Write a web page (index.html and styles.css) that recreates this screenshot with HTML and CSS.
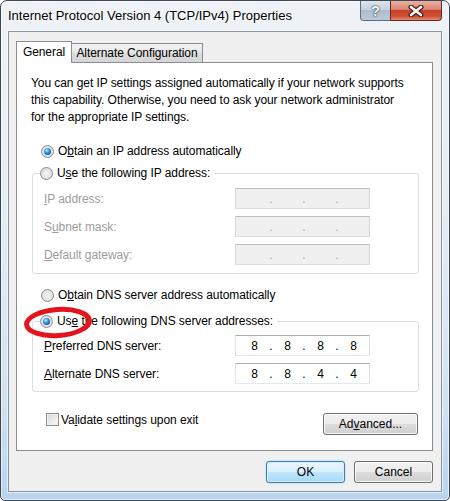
FILE: index.html
```html
<!DOCTYPE html>
<html lang="en">
<head>
    <meta charset="UTF-8">
    <title>Internet Protocol Version 4 (TCP/IPv4) Properties</title>
    <link rel="stylesheet" href="styles.css">
</head>
<body>
    <div class="window">
        <div class="titlebar">
            <div class="title">Internet Protocol Version 4 (TCP/IPv4) Properties</div>
            <div class="caption-btns">
                <div class="cap-btn help">?</div>
                <div class="cap-btn close">
                    <svg width="16" height="12" viewBox="0 0 16 12">
                        <path d="M3 2 L13 10 M13 2 L3 10" stroke="#4a1d15" stroke-width="5" stroke-linecap="round"/>
                        <path d="M3 2 L13 10 M13 2 L3 10" stroke="#fff" stroke-width="2.6" stroke-linecap="round"/>
                    </svg>
                </div>
            </div>
        </div>

        <div class="client">
            <div class="tabs">
                <div class="tab active">General</div>
                <div class="tab">Alternate Configuration</div>
            </div>

            <div class="panel">
                <p class="intro">You can get IP settings assigned automatically if your network supports<br>this capability. Otherwise, you need to ask your network administrator<br>for the appropriate IP settings.</p>

                <div class="option first"><span class="radio on"></span><span>O<u>b</u>tain an IP address automatically</span></div>

                <div class="group">
                    <div class="option group-head"><span class="radio"></span><span>U<u>s</u>e the following IP address:</span></div>
                    <div class="field-row disabled first-field">
                        <label><u>I</u>P address:</label>
                        <div class="ip"><span class="oct"></span><span class="dot">.</span><span class="oct"></span><span class="dot">.</span><span class="oct"></span><span class="dot">.</span><span class="oct"></span></div>
                    </div>
                    <div class="field-row disabled">
                        <label>S<u>u</u>bnet mask:</label>
                        <div class="ip"><span class="oct"></span><span class="dot">.</span><span class="oct"></span><span class="dot">.</span><span class="oct"></span><span class="dot">.</span><span class="oct"></span></div>
                    </div>
                    <div class="field-row disabled">
                        <label><u>D</u>efault gateway:</label>
                        <div class="ip"><span class="oct"></span><span class="dot">.</span><span class="oct"></span><span class="dot">.</span><span class="oct"></span><span class="dot">.</span><span class="oct"></span></div>
                    </div>
                </div>

                <div class="option dns-auto"><span class="radio"></span><span>O<u>b</u>tain DNS server address automatically</span></div>

                <div class="group dns">
                    <div class="option group-head"><span class="radio on"></span><span>Us<u>e</u> the following DNS server addresses:</span></div>
                    <div class="field-row first-field">
                        <label><u>P</u>referred DNS server:</label>
                        <div class="ip"><span class="oct">8</span><span class="dot">.</span><span class="oct">8</span><span class="dot">.</span><span class="oct">8</span><span class="dot">.</span><span class="oct">8</span></div>
                    </div>
                    <div class="field-row">
                        <label><u>A</u>lternate DNS server:</label>
                        <div class="ip"><span class="oct">8</span><span class="dot">.</span><span class="oct">8</span><span class="dot">.</span><span class="oct">4</span><span class="dot">.</span><span class="oct">4</span></div>
                    </div>
                </div>

                <div class="bottom-row">
                    <div class="check-label"><span class="checkbox"></span><span>Va<u>l</u>idate settings upon exit</span></div>
                    <button class="btn advanced">Ad<u>v</u>anced...</button>
                </div>
            </div>

            <div class="dialog-btns">
                <button class="btn default">OK</button>
                <button class="btn">Cancel</button>
            </div>
        </div>

        <!-- red marker drawn over the screenshot -->
        <svg class="marker" width="78" height="40" viewBox="0 0 78 40">
            <ellipse cx="38" cy="19.5" rx="31.5" ry="13" transform="rotate(-4 38 19.5)" fill="none" stroke="#e3141c" stroke-width="5"/>
        </svg>
    </div>
</body>
</html>
```

FILE: styles.css
```css
body { margin: 0; font-family: "Liberation Sans", Arial, sans-serif; font-size: 12px; letter-spacing: -0.07px; color: #000; background: #fff; }
u { text-underline-offset: 1px; }

.window { position: relative; width: 450px; height: 501px; box-sizing: border-box; border: 1px solid #3b4756; border-radius: 7px 7px 5px 5px; background: linear-gradient(180deg, #eef2f6 0%, #e6edf3 40%, #d3e2f0 80%, #b9d4ed 100%); box-shadow: inset 0 0 0 1px rgba(255,255,255,0.6); display: flex; flex-direction: column; overflow: hidden; }

.titlebar { height: 30px; flex: none; display: flex; align-items: flex-start; }
.title { padding-left: 7px; line-height: 30px; font-size: 13px; letter-spacing: 0; text-shadow: 0 0 6px #fff, 0 0 3px #fff; }
.caption-btns { margin-left: auto; margin-right: 7px; display: flex; }
.cap-btn { height: 20px; box-sizing: border-box; border: 1px solid #5d6e82; border-top: 0; display: flex; align-items: center; justify-content: center; }
.help { width: 31px; border-radius: 0 0 0 4px; background: linear-gradient(180deg, #dde5ee 0%, #c5d1de 45%, #aebdcd 50%, #bccad8 100%); color: #fff; font-weight: bold; font-size: 14px; text-shadow: 0 0 1px #1e2a3a, 0 0 2px #1e2a3a; }
.close { width: 52px; margin-left: -1px; border-radius: 0 0 4px 0; border-color: #6b2a20; background: linear-gradient(180deg, #eab1a3 0%, #d98470 45%, #c5412a 50%, #cf5034 80%, #e48c72 100%); }

.client { flex: none; margin: 0 7px; height: 461px; box-sizing: border-box; border: 1px solid #8694a4; background: #f0f0f0; padding: 9px 8px 0 7px; box-shadow: 0 0 0 1px rgba(255,255,255,0.6); }

.tabs { display: flex; align-items: flex-end; height: 21px; }
.tab { box-sizing: border-box; border: 1px solid #898c95; border-bottom: 0; text-align: center; }
.tab.active { position: relative; z-index: 1; width: 56px; height: 22px; margin-bottom: -1px; line-height: 21px; background: #fff; }
.tab:not(.active) { width: 132px; height: 19px; margin-left: -1px; line-height: 19px; background: linear-gradient(180deg, #f3f3f3, #e6e6e6 50%, #dcdcdc 51%, #d6d6d6); }

.panel { height: 389px; box-sizing: border-box; border: 1px solid #898c95; background: #fff; padding: 0 13px 0 15px; display: flex; flex-direction: column; }
.intro { margin: 12px 0 0 -1px; line-height: 17px; white-space: nowrap; }

.option { display: flex; align-items: center; height: 20px; line-height: 20px; white-space: nowrap; }
.option.first { margin-top: 15px; padding-left: 9px; }
.option.dns-auto { margin-top: 11px; padding-left: 9px; }

.radio { position: relative; flex: none; width: 13px; height: 13px; box-sizing: border-box; margin-right: 4px; border-radius: 50%; border: 1px solid #8b8d8f; background: radial-gradient(circle at 50% 50%, #f6f6f6 0%, #e4e4e4 55%, #cdcdcd 100%); }
.radio.on::after { content: ""; position: absolute; left: 2px; top: 2px; width: 7px; height: 7px; border-radius: 50%; background: radial-gradient(circle at 40% 35%, #c4f0ff 0%, #3aa2e6 35%, #1a5fa8 70%, #0c3468 100%); }

.group { margin-top: 12px; border: 1px solid #d5dfe5; border-radius: 3px; display: flex; flex-direction: column; padding-bottom: 8px; }
.group.dns { margin-top: 16px; padding-bottom: 7px; }
.group-head { align-self: flex-start; margin: -11px 0 0 7px; padding-right: 4px; background: #fff; }

.field-row { display: flex; align-items: center; height: 21px; margin-top: 7px; padding-left: 11px; }
.field-row.first-field { margin-top: 5px; }
.group.dns .field-row.first-field { margin-top: 4px; }
.field-row label { width: 191px; }
.disabled label { color: #9d9d9d; }

.ip { width: 135px; height: 21px; box-sizing: border-box; border: 1px solid; border-color: #abadb3 #dbdfe6 #e3e9ef #e2e3ea; background: #fff; display: flex; align-items: center; padding-left: 10px; }
.ip .oct { width: 17px; text-align: center; }
.ip .dot { width: 16px; text-align: center; }
.disabled .ip { background: #f0f0f0; border-color: #bfbfbf #d7d7d7 #dedede; color: #a0a0a0; }

.bottom-row { margin-top: 21px; display: flex; justify-content: space-between; align-items: flex-start; }
.check-label { display: flex; align-items: center; padding-left: 14px; height: 13px; }
.checkbox { flex: none; width: 13px; height: 13px; box-sizing: border-box; margin-right: 2px; border: 1px solid #8b8d8f; background: linear-gradient(135deg, #d6d6d6, #f9f9f9); box-shadow: inset 0 0 0 1px #f2f2f2; }

.btn { width: 79px; height: 22px; padding: 0; font: inherit; color: #000; border: 1px solid #707070; border-radius: 3px; background: linear-gradient(180deg, #f2f2f2 0%, #ebebeb 50%, #dddddd 51%, #cfcfcf 100%); box-shadow: inset 0 0 0 1px rgba(255,255,255,0.8); }
.btn.advanced { width: 95px; margin-right: 1px; }
.btn.default { border-color: #3c7fb1; background: linear-gradient(180deg, #eaf6fd 0%, #d9f0fc 50%, #bee6fd 51%, #a7d9f5 100%); box-shadow: inset 0 0 0 1px #d8f0fb, 0 0 2px #8fcbee; }

.dialog-btns { margin-top: 10px; display: flex; justify-content: flex-end; gap: 9px; }

.marker { position: absolute; left: 19px; top: 302px; }
```
